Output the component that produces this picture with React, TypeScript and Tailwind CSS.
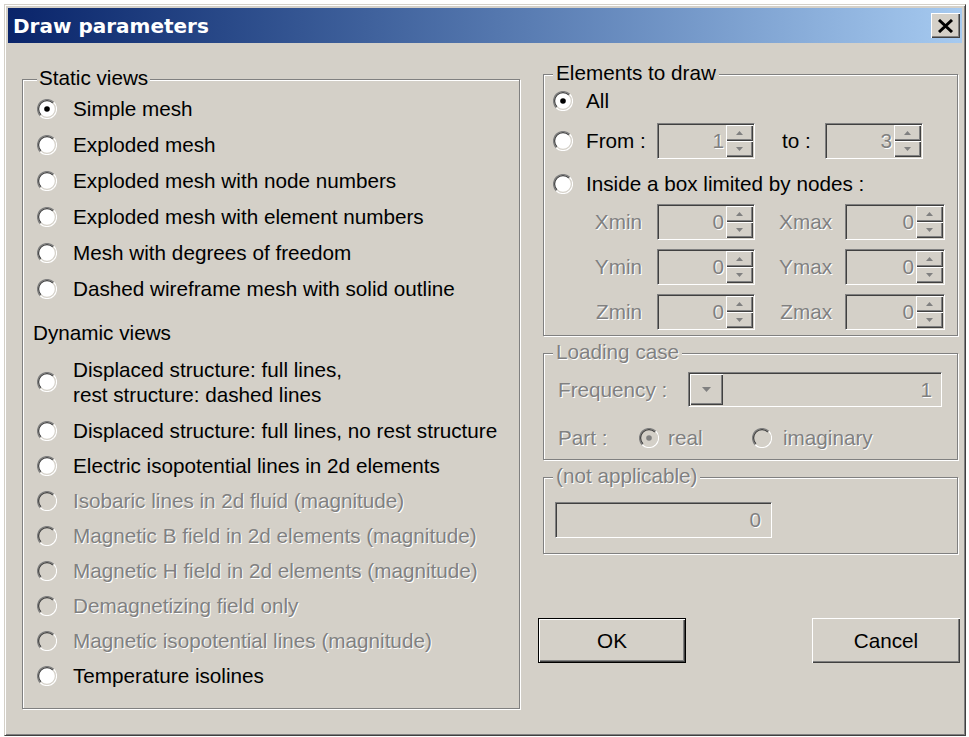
import React from "react";

const dim = "text-[#808080] [text-shadow:1px_1px_0_#ffffff]";
const sunken =
  "border border-t-[#808080] border-l-[#808080] border-b-white border-r-white shadow-[inset_1px_1px_0_#404040,inset_-1px_-1px_0_#d4d0c8] p-[1px]";
const raised =
  "bg-[#d4d0c8] shadow-[inset_1px_1px_0_#ffffff,inset_-1px_-1px_0_#404040,inset_-2px_-2px_0_#808080]";
const groupBox =
  "border border-[#808080] shadow-[1px_1px_0_#ffffff,inset_1px_1px_0_#ffffff]";

function Radio({ checked = false, disabled = false }: { checked?: boolean; disabled?: boolean }) {
  const fill = disabled ? "#d4d0c8" : "#ffffff";
  const dot = disabled ? "#808080" : "#000000";
  return (
    <svg width="20" height="20" viewBox="0 0 20 20" className="shrink-0">
      <circle cx="10" cy="10" r="9" fill={fill} />
      <path d="M3.28 16.72A9.5 9.5 0 0 1 16.72 3.28" fill="none" stroke="#808080" strokeWidth="1.2" />
      <path d="M16.72 3.28A9.5 9.5 0 0 1 3.28 16.72" fill="none" stroke="#ffffff" strokeWidth="1.2" />
      <path d="M4.06 15.94A8.4 8.4 0 0 1 15.94 4.06" fill="none" stroke="#404040" strokeWidth="1.2" />
      <path d="M15.94 4.06A8.4 8.4 0 0 1 4.06 15.94" fill="none" stroke="#d4d0c8" strokeWidth="1.2" />
      {checked && <circle cx="10" cy="10" r="2.8" fill={dot} />}
    </svg>
  );
}

function Spin() {
  return (
    <div className="flex flex-col w-[27px] h-full shrink-0">
      {["up", "down"].map(d => (
        <div key={d} className={`flex-1 flex items-center justify-center ${raised}`}>
          <svg width="7" height="4" viewBox="0 0 7 4">
            <path d={d === "up" ? "M3.5 0L7 4H0z" : "M0 0h7L3.5 4z"} fill="#808080" />
          </svg>
        </div>
      ))}
    </div>
  );
}

function NumField({ value, className }: { value: string; className: string }) {
  return (
    <div className={`flex h-[36px] ${sunken} ${className}`}>
      <div className={`flex-1 flex items-center justify-end pr-[2px] ${dim}`}>{value}</div>
      <Spin />
    </div>
  );
}

function Option({
  label,
  checked,
  disabled,
  className = "h-[35px]",
}: {
  label: string;
  checked?: boolean;
  disabled?: boolean;
  className?: string;
}) {
  return (
    <div className={`flex items-center gap-[16px] ${className}`}>
      <Radio checked={checked} disabled={disabled} />
      <span className={disabled ? dim : "text-black"}>{label}</span>
    </div>
  );
}

export default function App() {
  return (
    <div className="w-[969px] h-[737px] bg-white overflow-hidden font-['Liberation_Sans',Arial,sans-serif] text-[20.7px] leading-[24px] text-black">
      <div className="ml-[4px] mt-[4px] w-[962px] h-[732px] bg-[#d4d0c8] border border-t-[#d4d0c8] border-l-[#d4d0c8] border-r-[#404040] border-b-[#404040] shadow-[inset_1px_1px_0_#ffffff,inset_-1px_-1px_0_#808080] p-[3px] flex flex-col">
        {/* title bar */}
        <div className="h-[35px] shrink-0 bg-linear-to-r from-[#0a246a] to-[#a6caf0] flex items-center justify-between pl-[5px] pr-[2px]">
          <span className="font-['DejaVu_Sans',Verdana,sans-serif] font-bold text-[20px] text-white">
            Draw parameters
          </span>
          <button className={`w-[29px] h-[25px] flex items-center justify-center ${raised}`}>
            <svg width="17" height="14" viewBox="0 0 17 14">
              <path d="M2 1L15 13M15 1L2 13" stroke="#000" strokeWidth="3" />
            </svg>
          </button>
        </div>

        <div className="flex items-start pl-[14px]">
          {/* left: view types */}
          <fieldset className={`w-[493px] h-[641px] mt-[25px] pl-[14px] ${groupBox}`}>
            <legend className="px-[2px] leading-[20px] pb-[3px] bg-[#d4d0c8]">Static views</legend>
            <Option label="Simple mesh" checked className="h-[36px]" />
            <Option label="Exploded mesh" className="h-[36px]" />
            <Option label="Exploded mesh with node numbers" className="h-[36px]" />
            <Option label="Exploded mesh with element numbers" className="h-[36px]" />
            <Option label="Mesh with degrees of freedom" className="h-[36px]" />
            <Option label="Dashed wireframe mesh with solid outline" className="h-[36px]" />

            <div className="h-[36px] mt-[8px] -ml-[4px] flex items-center">Dynamic views</div>
            <div className="h-[62px] flex items-center gap-[16px]">
              <Radio />
              <span className="leading-[25px]">
                Displaced structure: full lines,
                <br />
                rest structure: dashed lines
              </span>
            </div>
            <Option
              label="Displaced structure: full lines, no rest structure"
              className="h-[35px] w-[482px] bg-[#d4d0c8]"
            />
            <Option label="Electric isopotential lines in 2d elements" />
            <Option label="Isobaric lines in 2d fluid (magnitude)" disabled />
            <Option label="Magnetic B field in 2d elements (magnitude)" disabled />
            <Option label="Magnetic H field in 2d elements (magnitude)" disabled />
            <Option label="Demagnetizing field only" disabled />
            <Option label="Magnetic isopotential lines (magnitude)" disabled />
            <Option label="Temperature isolines" />
          </fieldset>

          {/* right: element range, loading, buttons */}
          <div className="ml-[23px] mt-[20px] w-[415px] flex flex-col">
            <fieldset className={`h-[273px] pl-[9px] ${groupBox}`}>
              <legend className="px-[3px] leading-[20px] pb-[3px] bg-[#d4d0c8]">
                Elements to draw
              </legend>
              <div className="h-[30px] flex items-center gap-[13px]">
                <Radio checked />
                <span>All</span>
              </div>
              <div className="mt-[7px] h-[36px] flex items-center">
                <Radio />
                <span className="ml-[13px] w-[71px]">From :</span>
                <NumField value="1" className="w-[98px]" />
                <span className="ml-[27px] w-[43px]">to :</span>
                <NumField value="3" className="w-[98px]" />
              </div>
              <div className="mt-[10px] h-[30px] flex items-center gap-[13px]">
                <Radio />
                <span>Inside a box limited by nodes :</span>
              </div>
              {["X", "Y", "Z"].map((axis, i) => (
                <div key={axis} className={`h-[36px] flex items-center ${i === 0 ? "mt-[5px]" : "mt-[9px]"}`}>
                  <span className={`w-[89px] text-right ${dim}`}>{axis}min</span>
                  <NumField value="0" className="ml-[15px] w-[98px]" />
                  <span className={`w-[77px] text-right ${dim}`}>{axis}max</span>
                  <NumField value="0" className="ml-[13px] w-[100px]" />
                </div>
              ))}
            </fieldset>

            <fieldset className={`mt-[6px] h-[118px] pl-[9px] ${groupBox}`}>
              <legend className={`px-[3px] leading-[20px] pb-[3px] bg-[#d4d0c8] ${dim}`}>
                Loading case
              </legend>
              <div className="mt-[7px] h-[35px] flex items-center">
                <span className={`ml-[5px] w-[130px] ${dim}`}>Frequency :</span>
                <div className={`w-[254px] h-[35px] flex ${sunken}`}>
                  <div className={`w-[33px] h-full flex items-center justify-center ${raised}`}>
                    <svg width="9" height="5" viewBox="0 0 9 5">
                      <path d="M0 0h9L4.5 5z" fill="#808080" />
                    </svg>
                  </div>
                  <div className={`flex-1 flex items-center justify-end pr-[8px] ${dim}`}>1</div>
                </div>
              </div>
              <div className="mt-[15px] h-[32px] flex items-center">
                <span className={`ml-[5px] w-[77px] ${dim}`}>Part :</span>
                <span className="ml-[4px]">
                  <Radio checked disabled />
                </span>
                <span className={`ml-[9px] w-[35px] ${dim}`}>real</span>
                <span className="ml-[49px]">
                  <Radio disabled />
                </span>
                <span className={`ml-[11px] ${dim}`}>imaginary</span>
              </div>
            </fieldset>

            <fieldset className={`mt-[6px] h-[88px] pl-[9px] ${groupBox}`}>
              <legend className={`px-[3px] leading-[20px] pb-[3px] bg-[#d4d0c8] ${dim}`}>
                (not applicable)
              </legend>
              <div className={`mt-[13px] ml-[2px] w-[217px] h-[36px] flex items-center justify-end pr-[10px] ${sunken} ${dim}`}>
                0
              </div>
            </fieldset>

            <div className="mt-[64px] -ml-[5px] -mr-[2px] flex justify-between">
              <div className="border border-black">
                <button className={`w-[146px] h-[43px] flex items-center justify-center ${raised}`}>OK</button>
              </div>
              <button className={`w-[148px] h-[45px] flex items-center justify-center ${raised}`}>Cancel</button>
            </div>
          </div>
        </div>
      </div>
    </div>
  );
}
